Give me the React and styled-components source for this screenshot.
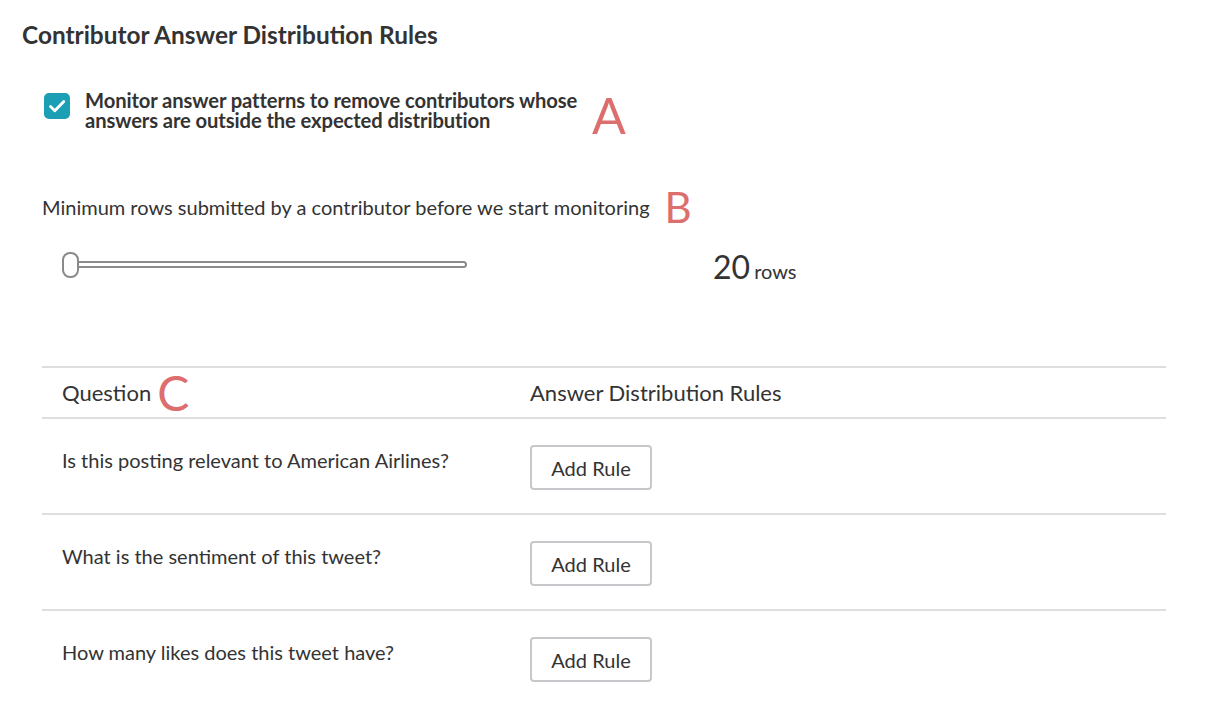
import React, { useState } from 'react'
import styled, { createGlobalStyle } from 'styled-components'

const Global = createGlobalStyle`
  html, body { margin: 0; padding: 0; background: #fff; }
  body { font-family: Lato, "Open Sans", sans-serif; color: #333; }
  * { box-sizing: border-box; }
`

const Page = styled.div`
  width: 1210px;
  height: 710px;
  padding: 19px 44px 0 22px;
  overflow: hidden;
`

const Title = styled.h1`
  margin: 0;
  font-size: 24.4px;
  font-weight: 700;
  line-height: 32px;
  color: #333;
`

const CheckRow = styled.label`
  display: flex;
  align-items: flex-start;
  gap: 15px;
  margin: 39px 0 0 22px;
`

const Box = styled.span`
  width: 26px;
  height: 26px;
  border-radius: 5px;
  background: #1b9fb5;
  display: flex;
  align-items: center;
  justify-content: center;
  margin-top: 3px;
  flex-shrink: 0;
`

const CheckText = styled.span`
  font-size: 20.2px;
  font-weight: 700;
  line-height: 20px;
  letter-spacing: -0.1px;
  color: #333;
  width: 505px;
`

const Marker = styled.span`
  font-size: ${p => p.$size || 48}px;
  font-weight: 400;
  line-height: 1;
  color: #dc6e6e;
  margin-left: ${p => p.$gap || 0}px;
`

const SettingLabel = styled.div`
  display: flex;
  align-items: center;
  margin: 46px 0 0 20px;
  font-size: 20px;
  line-height: 40px;
`

const SliderRow = styled.div`
  display: flex;
  align-items: center;
  margin: 15px 0 0 40px;
`

const Track = styled.div`
  position: relative;
  width: 405px;
  height: 26px;
  display: flex;
  align-items: center;
`

const Rail = styled.div`
  width: 100%;
  height: 7px;
  border: 2px solid #8a8a8a;
  border-radius: 4px;
  background: #fff;
`

const Thumb = styled.div`
  position: absolute;
  left: 0;
  top: 0;
  width: 17px;
  height: 26px;
  border: 2px solid #8a8a8a;
  border-radius: 8px;
  background: #fff;
`

const Value = styled.div`
  margin-left: 246px;
  margin-top: 4px;
  display: flex;
  align-items: baseline;
  gap: 4px;
  span:first-child { font-size: 32px; color: #333; }
  span:last-child { font-size: 20px; color: #333; }
`

const Table = styled.div`
  margin: 80px 0 0 20px;
  border-top: 2px solid #dedede;
`

const Row = styled.div`
  display: grid;
  grid-template-columns: 468px 1fr;
  align-items: ${p => (p.$head ? 'center' : 'start')};
  height: ${p => (p.$head ? 51 : 96)}px;
  padding: ${p => (p.$head ? '0' : '26px 0 0')} 20px;
  border-bottom: 2px solid #dedede;
  &:last-child { border-bottom: none; }
`

const HeadCell = styled.div`
  display: flex;
  align-items: center;
  font-size: 22px;
  color: #333;
`

const Question = styled.div`
  font-size: 20px;
  line-height: 30px;
  color: #333;
`

const Button = styled.button`
  width: 122px;
  height: 45px;
  border: 2px solid #c8c8cc;
  border-radius: 4px;
  background: #fff;
  font-family: inherit;
  font-size: 20px;
  color: #333;
  cursor: pointer;
`

const questions = [
  'Is this posting relevant to American Airlines?',
  'What is the sentiment of this tweet?',
  'How many likes does this tweet have?',
]

export default function App() {
  const [checked, setChecked] = useState(true)
  return (
    <Page>
      <Global />
      <Title>Contributor Answer Distribution Rules</Title>
      <CheckRow onClick={() => setChecked(!checked)}>
        <Box>
          {checked && (
            <svg width="18" height="18" viewBox="0 0 18 18">
              <path d="M2.5 9.5l4.3 4.2L15.8 4.5" fill="none" stroke="#fff" strokeWidth="2.8" strokeLinecap="round" strokeLinejoin="round" />
            </svg>
          )}
        </Box>
        <CheckText>
          Monitor answer patterns to remove contributors whose answers are outside the expected distribution
        </CheckText>
        <Marker $gap={-13} $size={50}>A</Marker>
      </CheckRow>
      <SettingLabel>
        Minimum rows submitted by a contributor before we start monitoring
        <Marker $gap={15} $size={42}>B</Marker>
      </SettingLabel>
      <SliderRow>
        <Track>
          <Rail />
          <Thumb />
        </Track>
        <Value>
          <span>20</span>
          <span>rows</span>
        </Value>
      </SliderRow>
      <Table>
        <Row $head>
          <HeadCell>
            Question <Marker $gap={6} $size={48}>C</Marker>
          </HeadCell>
          <HeadCell>Answer Distribution Rules</HeadCell>
        </Row>
        {questions.map(q => (
          <Row key={q}>
            <Question>{q}</Question>
            <div>
              <Button>Add Rule</Button>
            </div>
          </Row>
        ))}
      </Table>
    </Page>
  )
}
